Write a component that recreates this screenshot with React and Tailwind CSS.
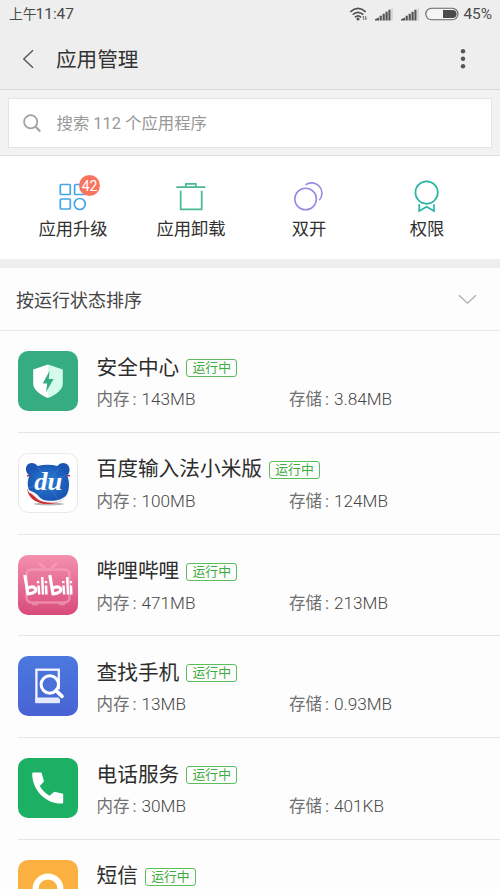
const FONT = "font-['Roboto','Noto_Sans_CJK_SC',sans-serif]";

function SignalIcon() {
  return (
    <svg width="18" height="13" viewBox="0 0 18 13" className="block">
      <g fill="#555">
        <path d="M0 12.500v-1.300l4-1.800v3.100z" />
        <rect x="4.600" y="7.700" width="2.200" height="4.800" />
        <rect x="7.600" y="5.700" width="2.200" height="6.800" />
        <rect x="10.500" y="3.700" width="2.200" height="8.800" />
        <rect x="13.400" y="1.700" width="2.100" height="10.800" />
      </g>
      <rect x="16.200" y="0.500" width="1.600" height="12" fill="#d2d2d2" />
    </svg>
  );
}

function StatusBar() {
  return (
    <div className="flex h-[28px] items-center pl-[9px] pr-[8px] text-[#4a4a4a]">
      <span className="text-[15.4px] leading-[28px]"><span className="text-[13.8px]">上午</span><span className="-ml-[1px]">11:47</span></span>
      <div className="ml-auto flex items-center">
        <svg width="20" height="14" viewBox="0 0 20 14" className="mr-[6px] block">
          <g fill="none" stroke="#505050" strokeWidth="1.7">
            <path d="M1.3 4.8Q9 -2 16.7 4.8" />
            <path d="M3.7 7.7Q9 3 14.3 7.7" />
            <path d="M6 10.3Q9 7.6 12 10.3" />
          </g>
          <circle cx="9" cy="12" r="1.5" fill="#505050" />
          <path d="M14.7 13V9.2M16.7 9v3.8M13.6 10.5l1.1-1.4M17.8 11.4l-1.1 1.4" stroke="#777" strokeWidth="1" fill="none" />
        </svg>
        <SignalIcon />
        <div className="w-[8px]" />
        <SignalIcon />
        <svg width="34" height="14" viewBox="0 0 34 14" className="ml-[6px] mr-[4px] block">
          <rect x="0.8" y="1.3" width="32.2" height="11.4" rx="5.7" fill="#f5f5f5" stroke="#666" strokeWidth="1.1" />
          <path d="M18 2.9h9.5a4.1 4.1 0 0 1 0 8.2H18z" fill="#4b4b4b" />
        </svg>
        <span className="text-[15.4px] leading-[28px]">45%</span>
      </div>
    </div>
  );
}

function Header() {
  return (
    <div className="flex h-[62px] items-center border-b border-[#d9d9d9] pl-[22px] pr-[34px]">
      <svg width="13" height="20" viewBox="0 0 13 20" className="block">
        <path d="M11 1.2L1.8 10l9.2 8.8" fill="none" stroke="#555" strokeWidth="1.4" />
      </svg>
      <span className="ml-[21px] pt-[3px] text-[20.6px] leading-[28px] text-[#333]">应用管理</span>
      <svg width="6" height="20" viewBox="0 0 6 20" className="ml-auto block" fill="#555">
        <circle cx="3" cy="2.3" r="2.2" />
        <circle cx="3" cy="9.7" r="2.2" />
        <circle cx="3" cy="17.2" r="2.2" />
      </svg>
    </div>
  );
}

function SearchBox() {
  return (
    <div className="h-[66px] border-b border-[#dedede] bg-[#f2f2f2] px-[8px] pt-[8px]">
      <div className="flex h-[50px] items-center border border-[#e4e4e4] bg-white pl-[14px]">
        <svg width="19" height="19" viewBox="0 0 19 19" className="block" fill="none" stroke="#a3a3a3">
          <circle cx="7.7" cy="7.7" r="6.6" strokeWidth="1.8" />
          <path d="M12.4 12.4l4.8 5" strokeWidth="2.2" />
        </svg>
        <span className="ml-[14.5px] pt-[1px] text-[16.4px] leading-[24px] text-[#989898]">搜索 112 个应用程序</span>
      </div>
    </div>
  );
}

const actions = [
  {
    label: "应用升级",
    badge: "42",
    icon: (
      <g stroke="#44a5e8" strokeWidth="1.7">
        <rect x="5.3" y="6.5" width="10" height="10" rx="1" />
        <rect x="19.6" y="6.5" width="10" height="10" rx="1" />
        <rect x="5.3" y="21" width="10" height="10" rx="1" />
        <circle cx="24.8" cy="26" r="5.500" />
      </g>
    ),
  },
  {
    label: "应用卸载",
    icon: (
      <g stroke="#48b993" strokeWidth="1.7">
        <path d="M3.3 9.2h29M7.7 12.7v18.6h21V12.7M12.8 9V5.8h10V9" />
      </g>
    ),
  },
  {
    label: "双开",
    icon: (
      <g stroke="#998ae2" strokeWidth="1.6">
        <circle cx="14.6" cy="21" r="10.8" />
        <path d="M14.5 6.8A10.4 10.4 0 0 1 28.3 22.2" />
      </g>
    ),
  },
  {
    label: "权限",
    icon: (
      <g stroke="#2ab5a5" strokeWidth="1.7">
        <circle cx="17.6" cy="14.6" r="11.2" />
        <path d="M10.2 26.2v6.8l7.4-4.300 7.400 4.300v-6.800" />
      </g>
    ),
  },
];

function Actions() {
  return (
    <div className="grid h-[103px] grid-cols-4 px-[14px] pt-[22px]">
      {actions.map((a) => (
        <div key={a.label} className="flex flex-col items-center">
          <div className="relative h-[36px] w-[36px]">
            <svg width="36" height="36" viewBox="0 0 36 36" className="block" fill="none">{a.icon}</svg>
            {a.badge && (
              <span className="absolute left-[24px] top-[-3px] flex h-[21px] w-[21px] items-center justify-center rounded-full bg-[#f9745f] text-[14px] leading-none text-white">
                {a.badge}
              </span>
            )}
          </div>
          <span className="mt-[3px] text-[17.3px] leading-[24px] text-[#303030]">{a.label}</span>
        </div>
      ))}
    </div>
  );
}

function SecurityIcon() {
  return (
    <svg viewBox="0 0 60 60" className="block h-[60px] w-[60px]">
      <rect width="60" height="60" rx="10" fill="#35ad80" />
      <path d="M30 13.5L15.2 18.5v14.3C15.2 39 23 44.5 30 47z" fill="#fff" />
      <path d="M30 13.5l14.8 5v14.3C44.8 39 37 44.5 30 47z" fill="#d5fbea" />
      <path d="M31.5 20L24.7 32.6h4.5L28 41.3l7.6-13.2h-4.8z" fill="#35ad80" />
    </svg>
  );
}

function BaiduIcon() {
  return (
    <svg viewBox="0 0 60 60" className="block h-[60px] w-[60px]">
      <defs>
        <radialGradient id="bear"><stop offset="0" stopColor="#2880d2" /><stop offset="1" stopColor="#1a55b4" /></radialGradient>
      </defs>
      <rect x="0.5" y="0.5" width="59" height="59" rx="10" fill="#fff" stroke="#ece6e8" />
      <ellipse cx="31" cy="51" rx="15" ry="1.5" fill="#b5b5b5" />
      <path d="M9 34c0 9 7 17 21 17 10 0 18-4 20-11l2-18H9z" fill="#cf2a32" />
      <path d="M8.500 30c0 5 1 8 3 10 4 1 7 7 13 8.500 10 2.500 20 1.500 24.500-5 2.500-4 3-12 3-20H9z" fill="#f3f5f9" />
      <path d="M11.500 22.500C6 19 7 10 13.500 10q4 0 6 3 10-2.500 20 0 2-3 6-3c6.500 0 8 9 3.500 12.500 3 6 2.500 14.500-.5 19.500-4 5-12 6.500-20 5.500-5-.5-7-3.500-10-6.500-3-2.500-6-3-7.500-4-2-5-1.500-10 .5-14.500z" fill="url(#bear)" />
      <path d="M20 14l20 33M41 15L20 43M10 35l42-14" stroke="#5b9bdf" strokeWidth="0.7" opacity="0.45" fill="none" />
      <text x="30.3" y="37.300" textAnchor="middle" textLength="28" lengthAdjust="spacingAndGlyphs" fill="#fff" className="font-['Liberation_Serif',serif] text-[26px] font-bold italic">du</text>
    </svg>
  );
}

function BilibiliIcon() {
  return (
    <svg viewBox="0 0 60 60" className="block h-[60px] w-[60px]">
      <defs>
        <linearGradient id="pink" x2="0" y2="1"><stop stopColor="#f490ad" /><stop offset="1" stopColor="#d84b7b" /></linearGradient>
      </defs>
      <rect width="60" height="60" rx="10" fill="url(#pink)" />
      <g fill="none" stroke="#f5a4ba" strokeWidth="2.6" opacity="0.65">
        <rect x="8.500" y="14.500" width="43" height="33" rx="5" />
        <path d="M21 8l7 6.500M39 8l-7 6.500M14 49h6M41 49h6" />
      </g>
      <g fill="none" stroke="#fff" strokeWidth="3.2" strokeLinejoin="round">
        <path d="M6.800 20l3.200 19c6-.4 9-3 7.200-5.800-1.700-2.200-5.200-1.200-8 .2" />
        <path d="M31.800 20L35 39c6-.4 9-3 7.200-5.800-1.700-2.200-5.200-1.200-8 .2" />
        <path d="M20.500 30.500l.7 9M24.200 22l.8 17.500M28 30.500l.4 9M45.500 30.500l.6 9M49.200 22l.8 17.500M53 30.500l.3 9" strokeWidth="2.500" />
        <path d="M20 26l.1 2.200M27.900 26l.1 2.200M45.200 26l.1 2.200M52.900 26l.1 2.200" strokeWidth="2.500" />
      </g>
    </svg>
  );
}

function FindIcon() {
  return (
    <svg viewBox="0 0 60 60" className="block h-[60px] w-[60px]">
      <defs>
        <linearGradient id="blue" x2="0" y2="1"><stop stopColor="#4a79de" /><stop offset="1" stopColor="#4963d4" /></linearGradient>
      </defs>
      <rect width="60" height="60" rx="10" fill="url(#blue)" />
      <rect x="18.400" y="13.700" width="22.400" height="31" fill="none" stroke="#f3f6ff" strokeWidth="2.300" />
      <path d="M17.200 41.500h24.700v5.700H17.200z" fill="#e5ebff" />
      <path d="M37 34l7 6.500" stroke="#4969d7" strokeWidth="7" />
      <circle cx="31.800" cy="28.500" r="8.700" fill="#4c70da" stroke="#fff" strokeWidth="3" />
      <path d="M38 34.500l6 5.800" stroke="#fff" strokeWidth="3.800" strokeLinecap="round" />
    </svg>
  );
}

function PhoneIcon() {
  return (
    <svg viewBox="0 0 60 60" className="block h-[60px] w-[60px]">
      <rect width="60" height="60" rx="10" fill="#1bb064" />
      <path d="M14.2 15.8q0-1.3 1.3-1.3h8l2.500 9-4.200 4.600c2.500 4.300 5.400 7.200 9.800 9.600l4.600-3.900 9 2v8.500q0 1.300-1.300 1.300C27.500 46 14.200 32 14.200 15.800z" fill="#fff" />
    </svg>
  );
}

function MessageIcon() {
  return (
    <svg viewBox="0 0 60 60" className="block h-[60px] w-[60px]">
      <rect width="60" height="60" rx="10" fill="#fbb03f" />
      <circle cx="30" cy="29" r="12.500" fill="none" stroke="#fff" strokeWidth="6" />
    </svg>
  );
}

const apps = [
  { name: "安全中心", memory: "143MB", storage: "3.84MB", Icon: SecurityIcon },
  { name: "百度输入法小米版", memory: "100MB", storage: "124MB", Icon: BaiduIcon },
  { name: "哔哩哔哩", memory: "471MB", storage: "213MB", Icon: BilibiliIcon },
  { name: "查找手机", memory: "13MB", storage: "0.93MB", Icon: FindIcon },
  { name: "电话服务", memory: "30MB", storage: "401KB", Icon: PhoneIcon },
  { name: "短信", Icon: MessageIcon },
];

function Stat({ label, value, className }) {
  return (
    <div className={`flex items-baseline text-[16.5px] leading-[22px] text-[#707070] ${className}`}>
      <span>{label}</span>
      <span className="w-[12px] pl-[3px]">:</span>
      <span className="text-[17.2px] font-light text-[#484848]">{value}</span>
    </div>
  );
}

function AppRow({ name, memory, storage, Icon }) {
  return (
    <div className="ml-[17.5px] flex h-[101.8px] shrink-0 items-start border-b border-[#e5e5e5] pt-[20px]">
      <Icon />
      <div className="ml-[19px] flex-1">
        <div className="mt-[2px] flex h-[28px] items-center">
          <span className="pt-[1px] text-[20.7px] leading-[28px] text-[#2d2d2d]">{name}</span>
          <span className="ml-[7px] mt-[2px] flex h-[18px] w-[51px] items-center justify-center rounded-[3px] border border-[#5cbd5c] pt-[1px] text-[12.8px] leading-none text-[#3eac3e]">
            运行中
          </span>
        </div>
        {memory && (
          <div className="mt-[7px] flex">
            <Stat label="内存" value={memory} className="w-[192.5px]" />
            <Stat label="存储" value={storage} className="" />
          </div>
        )}
      </div>
    </div>
  );
}

export default function App() {
  return (
    <div className={`flex h-[889px] w-[500px] flex-col overflow-hidden bg-[#fdfdfd] ${FONT}`}>
      <div className="shrink-0 bg-[#eeeeee]">
        <StatusBar />
        <Header />
        <SearchBox />
      </div>
      <div className="shrink-0 bg-white">
        <Actions />
      </div>
      <div className="h-[9px] shrink-0 bg-[#eeeeee]" />
      <div className="flex h-[63px] shrink-0 items-center justify-between border-b border-[#e8e8e8] pl-[16px] pr-[23px]">
        <span className="pt-[3px] text-[18px] leading-[26px] text-[#444]">按运行状态排序</span>
        <svg width="19" height="11" viewBox="0 0 19 11" className="block">
          <path d="M1 1.2l8.500 8 8.500-8" fill="none" stroke="#aaa" strokeWidth="1.200" />
        </svg>
      </div>
      {apps.map((app) => (
        <AppRow key={app.name} {...app} />
      ))}
    </div>
  );
}
